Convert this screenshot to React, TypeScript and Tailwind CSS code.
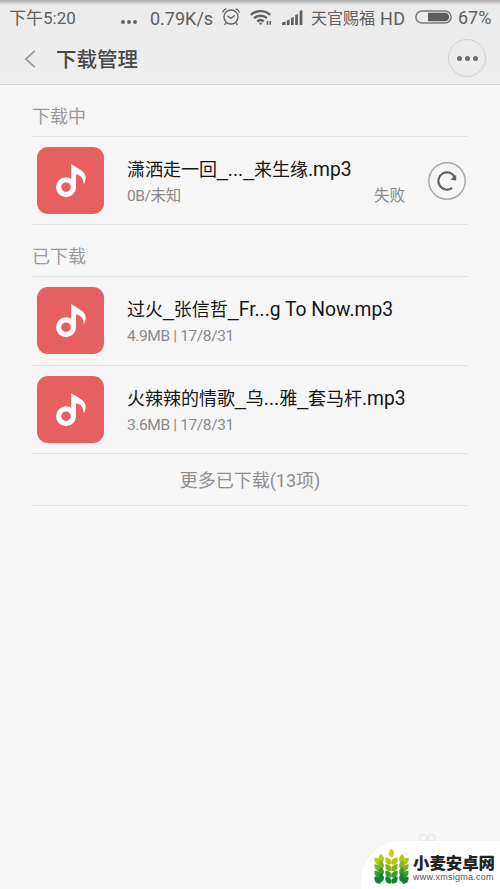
import {ReactNode} from "react";

const FONT = "font-['Roboto','Noto_Sans_CJK_SC',sans-serif]";

interface DownloadItem {
	name: string;
	detail: string;
	status?: string;
}

const downloading: DownloadItem[] = [
	{name: "潇洒走一回_..._来生缘.mp3", detail: "0B/未知", status: "失败"},
];

const downloaded: DownloadItem[] = [
	{name: "过火_张信哲_Fr...g To Now.mp3", detail: "4.9MB | 17/8/31"},
	{name: "火辣辣的情歌_乌...雅_套马杆.mp3", detail: "3.6MB | 17/8/31"},
];

function AlarmIcon() {
	return (
		<svg className="w-[18px] h-[18px]" viewBox="0 0 18 18" fill="none" stroke="#666" strokeWidth="1.4" strokeLinecap="round">
			<circle cx="9" cy="9" r="7"/>
			<path d="M6 8.200 9 10.400 12.200 7.800M.8 4A6 6 0 0 1 4 .9M14 .9a6 6 0 0 1 3.200 3.100M4.200 14.800 3 16.400M13.800 14.800l1.200 1.600"/>
		</svg>
	);
}

function WifiIcon() {
	return (
		<svg className="w-[22px] h-[17px]" viewBox="0 0 22 17" fill="none" stroke="#606060" strokeWidth="2.3">
			<path d="M.8 5.800a14.500 14.500 0 0 1 19.400 0M4 9.200a9.800 9.800 0 0 1 13 0M7.200 12.300a5.200 5.200 0 0 1 6.600 0"/>
			<path d="M8.400 13.700h4.200l-2.100 2.300z" fill="#606060" stroke="none"/>
			<path d="M17.500 12v3.700M20.300 12v3.700" strokeWidth="1.500"/>
		</svg>
	);
}

function SignalIcon() {
	return (
		<svg className="w-[21px] h-[15px]" viewBox="0 0 21 15" fill="#606060">
			<path d="M0 12.500 3.600 11.500V15H0zM4.800 10.500 7.600 9.500V15H4.800zM9 8 11.700 7V15H9zM13.200 5 15.900 4V15h-2.700zM17.600 1 20.400 0V15h-2.800z"/>
		</svg>
	);
}

function BatteryIcon() {
	return (
		<svg className="-mt-0.5 w-[37px] h-[14px] shrink-0" viewBox="0 0 37 14">
			<rect x=".9" y=".9" width="35.200" height="12.200" rx="6.100" fill="none" stroke="#7a7a7a" strokeWidth="1.500"/>
			<path d="M13 2.800h17a4.200 4.200 0 0 1 0 8.400H13z" fill="#5c5c5c"/>
		</svg>
	);
}

function StatusBar() {
	return (
		<div className="flex h-[34px] items-center pt-0.5 pl-[9px] text-[17px] text-[#606060] whitespace-nowrap">
			<span className="w-[111px] pt-px">下午5:20</span>
			<svg className="w-[18px] h-1 mt-2" viewBox="0 0 18 4" fill="#606060">
				<circle cx="3" cy="2" r="1.9"/><circle cx="9" cy="2" r="1.9"/><circle cx="15" cy="2" r="1.9"/>
			</svg>
			<span className="ml-3 w-[72px] text-[18px]">0.79K/s</span>
			<span className="-mt-0.5"><AlarmIcon/></span>
			<span className="ml-2.5 -mt-0.5"><WifiIcon/></span>
			<span className="ml-2.5 -mt-0.5"><SignalIcon/></span>
			<span className="ml-[8px] w-[69px] pt-px text-[16px]">天官赐福</span>
			<span className="w-[35px] text-[18px] tracking-[0.3px]">HD</span>
			<BatteryIcon/>
			<span className="ml-1.5 -mt-px text-[18px]">67%</span>
		</div>
	);
}

function Header() {
	return (
		<div className="flex h-[50px] items-center">
			<svg className="ml-6 w-3 h-[18px]" viewBox="0 0 12 18" fill="none" stroke="#9c9c9c" strokeWidth="1.8">
				<path d="M10.800.8 1.800 9l9 8.200"/>
			</svg>
			<h1 className="ml-5 mt-0.5 text-[20.5px] font-medium text-[#484848]">下载管理</h1>
			<button className="ml-auto mr-3.5 -mt-0.5 flex w-[38px] h-[38px] items-center justify-center gap-[3px] rounded-full border-[1.5px] border-[#d0d0d0]">
				<i className="w-[5px] h-[5px] rounded-full bg-[#6c6c6c]"/>
				<i className="w-[5px] h-[5px] rounded-full bg-[#6c6c6c]"/>
				<i className="w-[5px] h-[5px] rounded-full bg-[#6c6c6c]"/>
			</button>
		</div>
	);
}

function MusicIcon() {
	return (
		<svg className="ml-[5px] w-[67px] h-[67px] shrink-0" viewBox="0 0 67 67">
			<rect width="67" height="67" rx="11" fill="#e66062"/>
			<circle cx="29" cy="40.200" r="7.400" fill="none" stroke="#fff" strokeWidth="5.200"/>
			<path d="M34.200 16.800c4 4 14.500 6.500 14.500 14 0 2.500-.8 4.800-2 6.700 0-6-3-9.500-7.800-10.200V40.500h-4.700z" fill="#fff"/>
		</svg>
	);
}

function RetryButton() {
	return (
		<button className="w-[38px] h-[38px] shrink-0">
			<svg viewBox="0 0 38 38" fill="none">
				<circle cx="19" cy="19" r="18.200" stroke="#aaa" strokeWidth="1.500"/>
				<path d="M24.200 25.800A8.600 8.600 0 1 1 26.800 15.500" stroke="#606060" strokeWidth="2.100"/>
				<path d="M28.200 12.800v5.700l-6-.8z" fill="#606060"/>
			</svg>
		</button>
	);
}

function SectionTitle({children}: {children: ReactNode}) {
	return (
		<h2 className="flex h-[52px] items-center border-b border-[#e2e2e2] pt-[11px] text-[18px] text-[#9a9a9a]">{children}</h2>
	);
}

// Latin runs are set slightly larger than the Chinese text, underscores wider
function FileName({name}: {name: string}) {
	return (
		<p className="text-[18px] leading-[26px] text-[#161616]">
			{name.split(/(_|[A-Za-z0-9. ]+)/).map((part, i) => {
				if (part === "_") return <span key={i} className="font-['Liberation_Sans',sans-serif] text-[19.5px]">_</span>;
				if (/^[A-Za-z0-9. ]+$/.test(part)) return <span key={i} className="text-[19.3px]">{part}</span>;
				return part;
			})}
		</p>
	);
}

function DownloadRow({item}: {item: DownloadItem}) {
	return (
		<li className={`flex items-center border-b border-[#e2e2e2] ${item.status ? "h-[88px]" : "h-[88.5px]"}`}>
			<MusicIcon/>
			<div className="ml-[23px] w-[278px] pt-[5px] whitespace-nowrap">
				<FileName name={item.name}/>
				<div className="flex justify-between text-[15.5px] leading-[27px] text-[#8a8a8a]">
					<span className="tracking-[-0.38px]">{item.detail}</span>
					{item.status && <span>{item.status}</span>}
				</div>
			</div>
			{item.status && <div className="ml-[23px] flex"><RetryButton/></div>}
		</li>
	);
}

const LEAF = "M0 0C-3.600-1.800-3.600-5.800 0-9 3.600-5.800 3.600-1.800 0 0z";

const leafRows = [
	{y: 16.5, fill: "#b4c818"},
	{y: 23, fill: "#7fb522"},
	{y: 29.5, fill: "#3a9c30"},
	{y: 35.5, fill: "#128039"},
];

function WheatLogo() {
	return (
		<svg className="w-[37px] h-[36px] shrink-0" viewBox="0 0 37 36">
			<path d={LEAF} transform="translate(18.500 9.500)" fill="#d3d014"/>
			{leafRows.map(({y, fill}) => (
				<g key={y} fill={fill}>
					<path d={LEAF} transform={`translate(7.500 ${y}) rotate(-42)`}/>
					<path d={LEAF} transform={`translate(8.500 ${y - 1.5}) rotate(-4)`}/>
					<path d={LEAF} transform={`translate(18 ${y}) rotate(-38)`}/>
					<path d={LEAF} transform={`translate(19 ${y}) rotate(38)`}/>
					<path d={LEAF} transform={`translate(28.500 ${y - 1.5}) rotate(4)`}/>
					<path d={LEAF} transform={`translate(29.500 ${y}) rotate(42)`}/>
				</g>
			))}
		</svg>
	);
}

function Watermark() {
	return (
		<div className="absolute bottom-0 right-0 flex h-12 w-[139px] items-start rounded-tl-[40px] bg-white pl-3 pt-[7px]">
			<WheatLogo/>
			<div className="ml-[3px] pt-[7px] whitespace-nowrap">
				<p className="text-[16.4px] leading-[17px] font-black text-[#222]">小麦安卓网</p>
				<p className="font-['Liberation_Sans',sans-serif] text-[9px] leading-[11px] tracking-[0.25px] text-[#555]">www.xmsigma.com</p>
			</div>
		</div>
	);
}

export default function App() {
	return (
		<div className={`relative h-[889px] w-[500px] overflow-hidden bg-[#f6f6f6] ${FONT}`}>
			<header className="h-[85px] border-b border-[#d4d4d4] bg-linear-to-b from-[#a8a8a8] via-[#ececec] via-[5px] to-[#eee]">
				<StatusBar/>
				<Header/>
			</header>
			<main className="px-8">
				<SectionTitle>下载中</SectionTitle>
				<ul>{downloading.map((item) => <DownloadRow key={item.name} item={item}/>)}</ul>
				<SectionTitle>已下载</SectionTitle>
				<ul>{downloaded.map((item) => <DownloadRow key={item.name} item={item}/>)}</ul>
				<button className="h-[52px] w-full border-b border-[#e2e2e2] pt-px text-[18px] text-[#8f8f8f]">更多已下载(13项)</button>
			</main>
			<svg className="absolute left-[418px] top-[833px] w-5 h-4" viewBox="0 0 20 16" fill="none" stroke="#e8e8e8" strokeWidth="1.500">
				<circle cx="5.500" cy="5" r="3.500"/>
				<circle cx="13.500" cy="5" r="3.500"/>
			</svg>
			<Watermark/>
		</div>
	);
}
